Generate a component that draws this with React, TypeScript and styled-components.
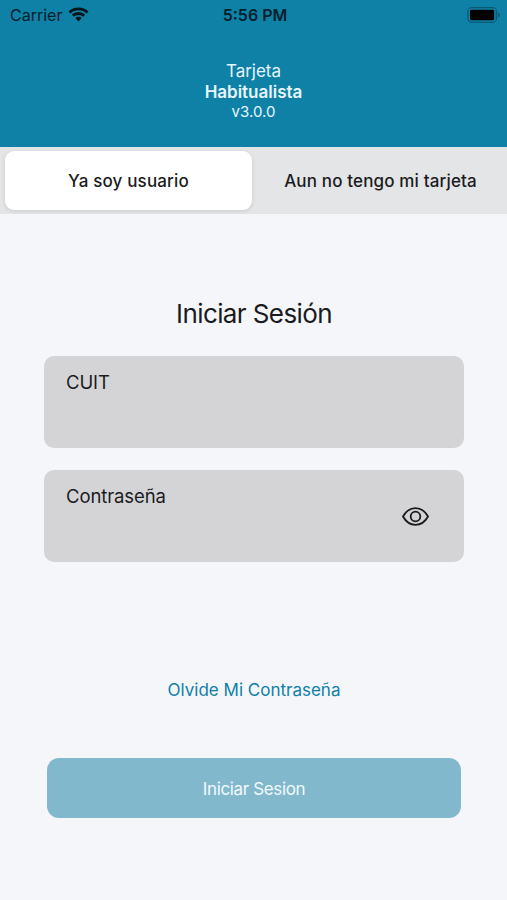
import { useState } from 'react';
import { createGlobalStyle, styled, ThemeProvider } from 'styled-components';

const theme = {
  colors: {
    primary: '#0f80a6',
    primaryDisabled: '#81b8cc',
    background: '#f4f6fa',
    tabs: '#e4e5e7',
    field: '#d4d4d6',
    text: '#1b1b1e',
  },
};

const GlobalStyle = createGlobalStyle`
  * {
    box-sizing: border-box;
    margin: 0;
    padding: 0;
  }

  body {
    background: #f4f6fa;
    font-family: Inter, 'Liberation Sans', sans-serif;
  }

  button,
  input {
    border: none;
    background: none;
    font-family: inherit;
  }
`;

const StyledScreen = styled.div`
  display: flex;
  flex-direction: column;
  height: 900px;
  background: ${({ theme }) => theme.colors.background};
  color: ${({ theme }) => theme.colors.text};
`;

const StyledHeader = styled.header`
  height: 147px;
  background: ${({ theme }) => theme.colors.primary};
`;

const StyledStatusBar = styled.div`
  display: grid;
  grid-template-columns: 1fr auto 1fr;
  align-items: center;
  height: 29px;
  padding: 0 7px 0 10px;
  color: #04202b;
  font-size: 16px;
`;

const StyledCarrier = styled.div`
  display: flex;
  align-items: center;
  gap: 6px;
`;

const StyledTime = styled.p`
  font-weight: 600;
`;

const StyledBattery = styled.svg`
  justify-self: end;
`;

const StyledBrand = styled.div`
  display: flex;
  flex-direction: column;
  align-items: center;
  padding-top: 32px;
  color: #e6f6fc;
  font-size: 17px;
  line-height: 21px;
`;

const StyledBrandName = styled.p`
  font-weight: 600;
`;

const StyledVersion = styled.p`
  font-size: 15px;
  line-height: 18px;
`;

const StyledTabs = styled.nav`
  display: grid;
  grid-template-columns: 247px 1fr;
  gap: 5px;
  height: 67px;
  padding: 4px 3px 4px 5px;
  background: ${({ theme }) => theme.colors.tabs};
`;

const StyledTab = styled.button<{ $active: boolean }>`
  border-radius: 9px;
  background: ${({ $active }) => ($active ? '#fff' : 'transparent')};
  box-shadow: ${({ $active }) => ($active ? '0 1px 4px rgba(0, 0, 0, 0.12)' : 'none')};
  color: ${({ theme }) => theme.colors.text};
  font-size: 17px;
  font-weight: 500;
  letter-spacing: 0.15px;
  white-space: nowrap;
`;

const StyledForm = styled.form`
  display: flex;
  flex-direction: column;
  align-items: center;
  padding: 84px 43px 0 44px;
`;

const StyledTitle = styled.h1`
  margin-bottom: 26px;
  font-size: 26px;
  font-weight: 400;
  line-height: 32px;
  letter-spacing: -0.6px;
`;

const StyledField = styled.div`
  display: flex;
  align-items: center;
  width: 100%;
  height: 92px;
  margin-bottom: 22px;
  padding: 0 35px 0 22px;
  border-radius: 10px;
  background: ${({ theme }) => theme.colors.field};
`;

const StyledLabel = styled.label`
  display: flex;
  flex: 1;
  flex-direction: column;
  height: 100%;
  padding-top: 14px;
  font-size: 18.5px;
  line-height: 24px;
  letter-spacing: -0.1px;
`;

const StyledInput = styled.input`
  width: 100%;
  height: 40px;
  outline: none;
  font-size: 18px;
`;

const StyledEyeButton = styled.button`
  display: flex;
`;

const StyledForgot = styled.button`
  margin: 94px 0 56px;
  color: ${({ theme }) => theme.colors.primary};
  font-size: 17px;
  line-height: 24px;
`;

const StyledSubmit = styled.button`
  width: 414px;
  height: 60px;
  padding-top: 1px;
  border-radius: 12px;
  background: ${({ theme }) => theme.colors.primaryDisabled};
  color: #f1fafd;
  font-size: 17px;
  letter-spacing: -0.35px;
`;

const WifiIcon = () => (
  <svg width="21" height="15" viewBox="0 0 21 15" fill="#04161d">
    <path d="M10.5 0.4C6.6 0.4 3 1.9 0.5 4.4L2.5 6.4C4.6 4.4 7.4 3.2 10.5 3.2S16.4 4.4 18.5 6.4L20.5 4.4C18 1.9 14.4 0.4 10.5 0.4Z" />
    <path d="M10.5 5.1C7.9 5.1 5.6 6.1 3.9 7.8L5.9 9.8C7.1 8.6 8.7 7.9 10.5 7.9S13.9 8.6 15.1 9.8L17.1 7.8C15.4 6.1 13.1 5.1 10.5 5.1Z" />
    <path d="M10.5 9.8C9.2 9.8 8.1 10.3 7.3 11.1L10.5 14.4L13.7 11.1C12.9 10.3 11.8 9.8 10.5 9.8Z" />
  </svg>
);

const BatteryIcon = () => (
  <StyledBattery width="33" height="16" viewBox="0 0 33 16">
    <rect x="0.9" y="0.7" width="28.6" height="14.6" rx="4" fill="none" stroke="#0a5a75" strokeWidth="1.3" />
    <rect x="3" y="2.8" width="24.2" height="10.4" rx="1.6" fill="#000" />
    <path d="M31 5.6C32.2 6 32.8 7 32.8 8S32.2 10 31 10.4Z" fill="#0a5a75" />
  </StyledBattery>
);

const EyeIcon = () => (
  <svg width="27" height="19" viewBox="0 0 27 19" fill="none" stroke="#1b1b1e" strokeWidth="1.8">
    <path d="M1 9.5C3.8 4.4 8.2 1.2 13.5 1.2S23.2 4.4 26 9.5C23.2 14.6 18.8 17.8 13.5 17.8S3.8 14.6 1 9.5Z" strokeLinejoin="round" />
    <circle cx="13.5" cy="9.5" r="4.8" />
  </svg>
);

const tabs = ['Ya soy usuario', 'Aun no tengo mi tarjeta'];

const App = () => {
  const [activeTab, setActiveTab] = useState(0);
  const [showPassword, setShowPassword] = useState(false);

  return (
    <ThemeProvider theme={theme}>
      <GlobalStyle />
      <StyledScreen>
        <StyledHeader>
          <StyledStatusBar>
            <StyledCarrier>
              Carrier
              <WifiIcon />
            </StyledCarrier>
            <StyledTime>5:56 PM</StyledTime>
            <BatteryIcon />
          </StyledStatusBar>
          <StyledBrand>
            <p>Tarjeta</p>
            <StyledBrandName>Habitualista</StyledBrandName>
            <StyledVersion>v3.0.0</StyledVersion>
          </StyledBrand>
        </StyledHeader>
        <StyledTabs>
          {tabs.map((tab, index) => (
            <StyledTab key={tab} $active={index === activeTab} onClick={() => setActiveTab(index)}>
              {tab}
            </StyledTab>
          ))}
        </StyledTabs>
        <StyledForm onSubmit={(e) => e.preventDefault()}>
          <StyledTitle>Iniciar Sesión</StyledTitle>
          <StyledField>
            <StyledLabel>
              CUIT
              <StyledInput type="text" />
            </StyledLabel>
          </StyledField>
          <StyledField>
            <StyledLabel>
              Contraseña
              <StyledInput type={showPassword ? 'text' : 'password'} />
            </StyledLabel>
            <StyledEyeButton type="button" onClick={() => setShowPassword(!showPassword)}>
              <EyeIcon />
            </StyledEyeButton>
          </StyledField>
          <StyledForgot type="button">Olvide Mi Contraseña</StyledForgot>
          <StyledSubmit type="submit">Iniciar Sesion</StyledSubmit>
        </StyledForm>
      </StyledScreen>
    </ThemeProvider>
  );
};

export default App;
